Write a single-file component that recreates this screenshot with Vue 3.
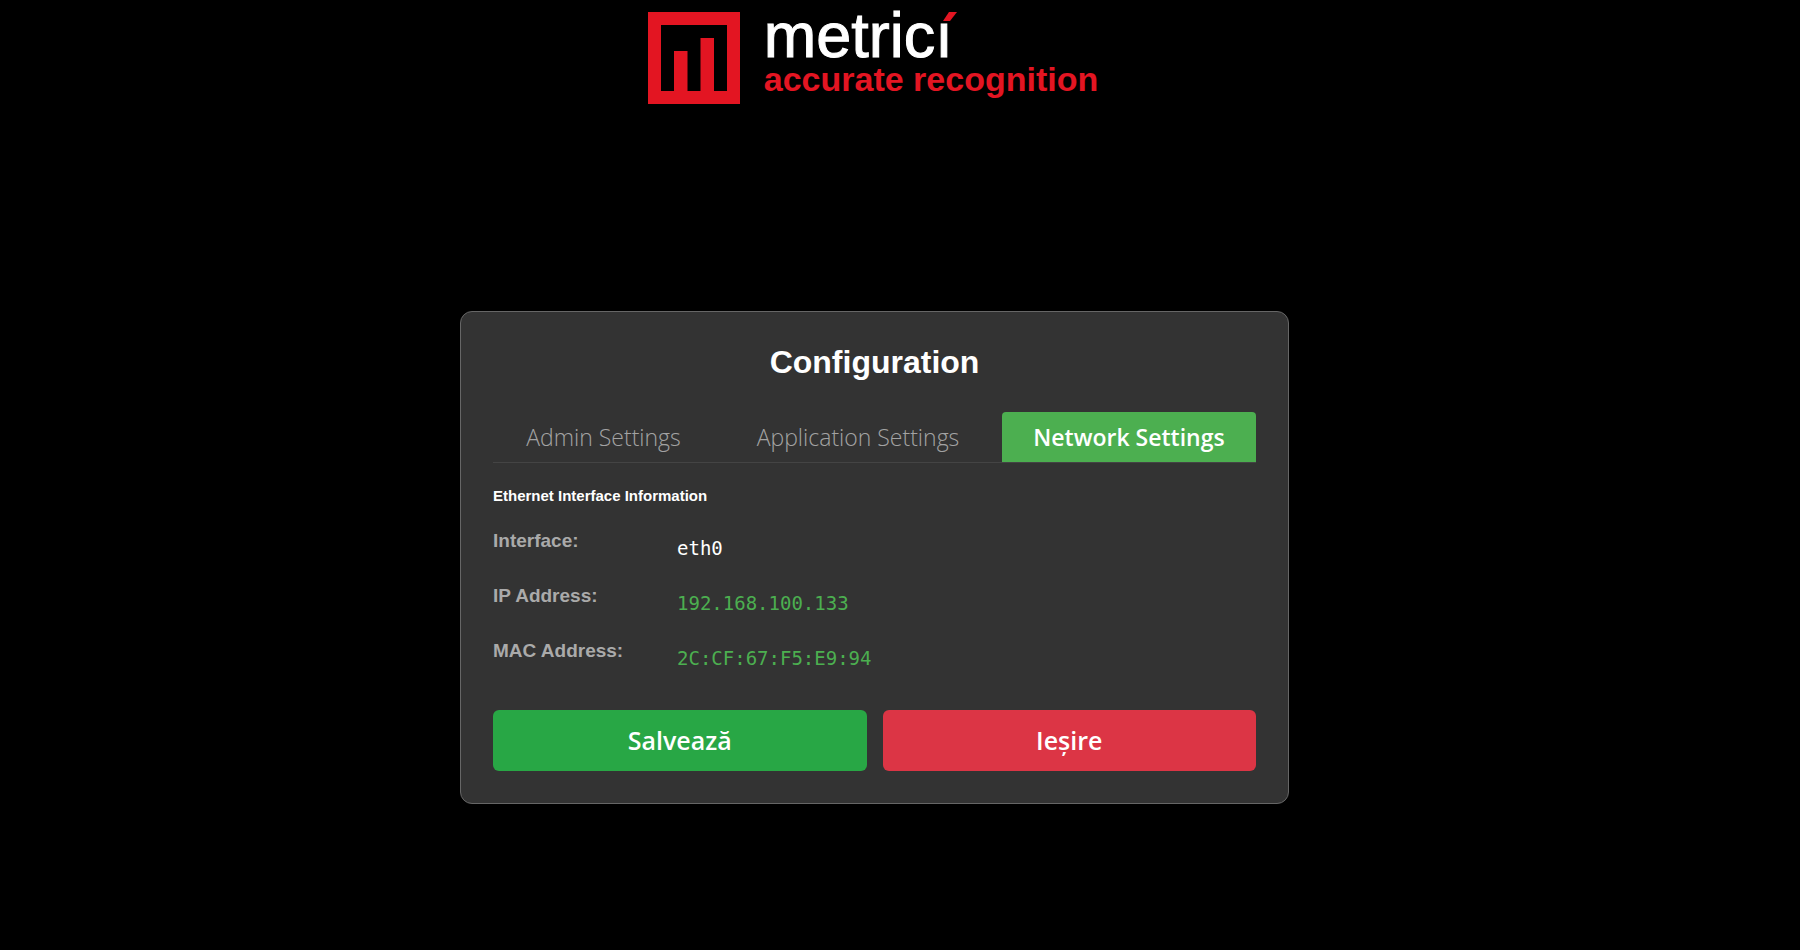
<script setup>
import { ref } from 'vue'

const tabs = ['Admin Settings', 'Application Settings', 'Network Settings']
const active = ref(2)
const rows = [
  { label: 'Interface:', value: 'eth0', highlight: false },
  { label: 'IP Address:', value: '192.168.100.133', highlight: true },
  { label: 'MAC Address:', value: '2C:CF:67:F5:E9:94', highlight: true }
]
</script>

<template>
  <div class="page">
    <header class="brand">
      <svg class="mark" viewBox="0 0 92 92" aria-hidden="true">
        <path
          fill="#e31522"
          fill-rule="evenodd"
          d="M0 0H92V92H0ZM13 13V79H26V39H39.500V79H52.500V26H66V79H79V13Z"
        />
      </svg>
      <div class="wordmark">
        <span class="name">metricı<svg class="accent" viewBox="0 0 14 9" aria-hidden="true"><path fill="#e31522" d="M6 0H14L7 9H0Z" /></svg></span>
        <span class="tagline">accurate recognition</span>
      </div>
    </header>

    <main class="card">
      <h1>Configuration</h1>
      <div class="tabs" role="tablist">
        <button
          v-for="(tab, i) in tabs"
          :key="tab"
          type="button"
          role="tab"
          class="tab"
          :class="{ active: active === i }"
          :aria-selected="active === i"
          @click="active = i"
        >{{ tab }}</button>
      </div>
      <h2>Ethernet Interface Information</h2>
      <dl class="info">
        <div v-for="row in rows" :key="row.label" class="row">
          <dt>{{ row.label }}</dt>
          <dd :class="{ highlight: row.highlight }">{{ row.value }}</dd>
        </div>
      </dl>
      <div class="actions">
        <button type="button" class="save">Salvează</button>
        <button type="button" class="exit">Ieșire</button>
      </div>
    </main>
  </div>
</template>

<style>
body {
  background: #000;
}
</style>

<style scoped>
.page {
  box-sizing: border-box;
  min-height: 100vh;
  padding: 12px 51px 146px 0;
  display: flex;
  flex-direction: column;
  align-items: center;
  justify-content: space-between;
  gap: 32px;
  color: #fff;
  font-family: "Liberation Sans", Arial, sans-serif;
}
.brand {
  display: flex;
  gap: 24px;
  padding-right: 3px;
}
.mark {
  width: 92px;
  height: 92px;
}
.wordmark {
  display: flex;
  flex-direction: column;
  gap: 2px;
}
.name {
  position: relative;
  align-self: flex-start;
  font-size: 63px;
  line-height: 46px;
  -webkit-text-stroke: 1px #fff;
}
.accent {
  position: absolute;
  top: 0;
  right: -4px;
  width: 14px;
  height: 9px;
}
.tagline {
  color: #e31522;
  font-size: 34px;
  font-weight: 700;
  line-height: 38px;
}
.card {
  box-sizing: border-box;
  width: 100%;
  max-width: 829px;
  padding: 32px;
  background: #333;
  border: 1px solid #666;
  border-radius: 12px;
}
h1 {
  margin: 0 0 32px;
  font-size: 32px;
  line-height: 36px;
  text-align: center;
}
.tabs {
  display: grid;
  grid-template-columns: 221fr 272fr 254fr;
  gap: 8px;
  margin-bottom: 24px;
  border-bottom: 1px solid #444;
}
.tab {
  height: 50px;
  padding: 0;
  border: 0;
  border-radius: 4px 4px 0 0;
  background: none;
  color: #a3a3a3;
  font: 300 23px/28px "Open Sans", sans-serif;
  white-space: nowrap;
}
.tab.active {
  background: #4caf50;
  color: #fff;
  font-weight: 600;
}
h2 {
  margin: 0 0 26px;
  font-size: 15px;
  line-height: 17px;
}
.info {
  display: grid;
  gap: 17px;
  margin: 0 0 32px;
}
.row {
  display: flex;
  font-size: 19px;
  line-height: 22px;
}
dt {
  width: 184px;
  color: #aaa;
  font-weight: 700;
}
dd {
  margin: 0;
  padding: 7px 0 9px;
  font-family: "DejaVu Sans Mono", monospace;
}
.highlight {
  color: #4caf50;
}
.actions {
  display: grid;
  grid-template-columns: 1fr 1fr;
  gap: 16px;
}
.actions button {
  height: 61px;
  padding: 0 0 2px;
  border: 0;
  border-radius: 6px;
  color: #fff;
  font: 600 25px/30px "Open Sans", sans-serif;
}
.save {
  background: #28a745;
}
.exit {
  background: #dc3545;
}
button {
  cursor: pointer;
}
</style>
